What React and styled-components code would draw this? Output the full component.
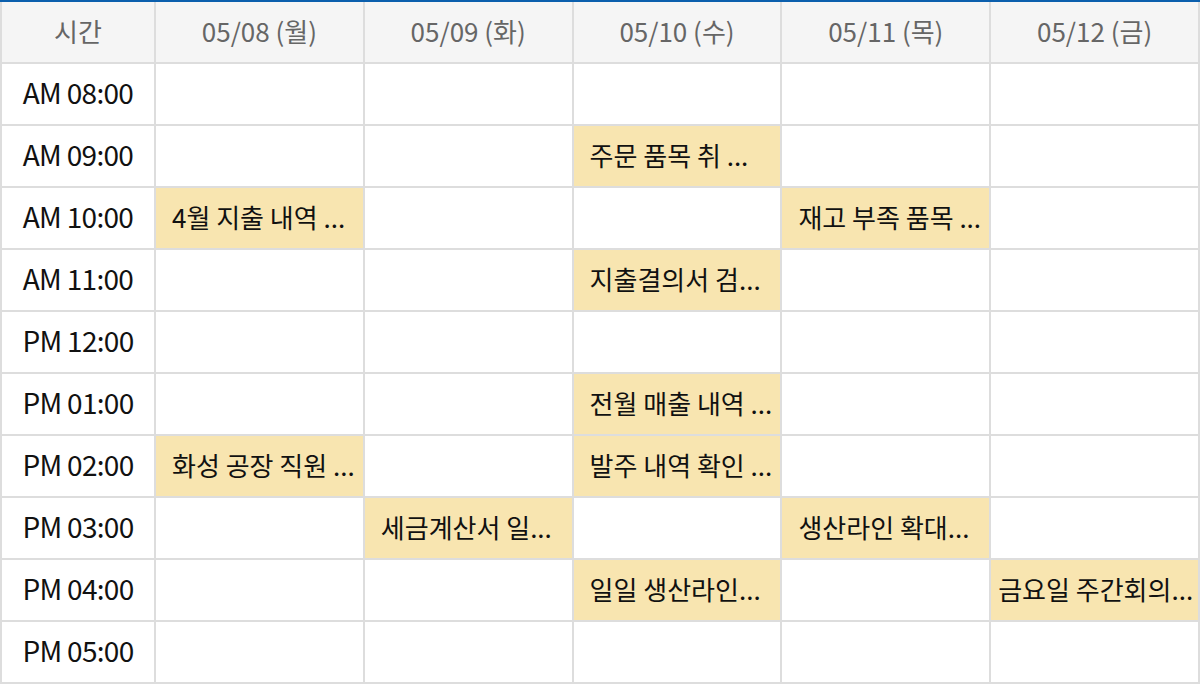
import styled, { createGlobalStyle } from "styled-components";

const GlobalStyle = createGlobalStyle`
	html, body {
		margin: 0;
		padding: 0;
		background: #fff;
	}
	body {
		font-family: "Noto Sans CJK KR", "Noto Sans", sans-serif;
	}
`;

const days = ["05/08 (월)", "05/09 (화)", "05/10 (수)", "05/11 (목)", "05/12 (금)"];

const times = [
	"AM 08:00",
	"AM 09:00",
	"AM 10:00",
	"AM 11:00",
	"PM 12:00",
	"PM 01:00",
	"PM 02:00",
	"PM 03:00",
	"PM 04:00",
	"PM 05:00",
];

// "row-day" -> title (long ones overflow the cell and sit tighter)
const events = {
	"1-2": { title: "주문 품목 취 ..." },
	"2-0": { title: "4월 지출 내역 ..." },
	"2-3": { title: "재고 부족 품목 ..." },
	"3-2": { title: "지출결의서 검..." },
	"5-2": { title: "전월 매출 내역 ..." },
	"6-0": { title: "화성 공장 직원 ..." },
	"6-2": { title: "발주 내역 확인 ..." },
	"7-1": { title: "세금계산서 일..." },
	"7-3": { title: "생산라인 확대..." },
	"8-2": { title: "일일 생산라인..." },
	"8-4": { title: "금요일 주간회의...", wide: true },
};

export default function App() {
	return (
		<>
			<GlobalStyle />
			<Schedule>
				<HeadCell>시간</HeadCell>
				{days.map((d) => (
					<HeadCell key={d}>{d}</HeadCell>
				))}
				{times.map((t, r) => (
					<Row key={t} time={t} r={r} />
				))}
			</Schedule>
		</>
	);
}

function Row({ time, r }) {
	return (
		<>
			<TimeCell>{time}</TimeCell>
			{days.map((d, c) => {
				const ev = events[`${r}-${c}`];
				return (
					<DayCell key={d} $filled={!!ev} $wide={ev?.wide}>
						{ev && <EventText>{ev.title}</EventText>}
					</DayCell>
				);
			})}
		</>
	);
}

const Schedule = styled.div`
	width: 1200px;
	box-sizing: border-box;
	display: grid;
	grid-template-columns: 152px repeat(5, 1fr);
	grid-auto-rows: 60px;
	gap: 2px;
	padding: 0 2px 2px;
	background: #dddddd;
	border-top: 2px solid #0b5fad;
`;

const HeadCell = styled.div`
	background: #f5f5f5;
	color: #666;
	font-size: 26px;
	display: flex;
	align-items: center;
	justify-content: center;
	padding-bottom: 4px;
`;

const TimeCell = styled.div`
	background: #fff;
	color: #111;
	font-size: 28px;
	letter-spacing: -0.7px;
	display: flex;
	align-items: center;
	justify-content: center;
	padding-bottom: 4px;
`;

const DayCell = styled.div`
	background: ${(p) => (p.$filled ? "#f8e5b0" : "#fff")};
	display: flex;
	align-items: center;
	padding: 0 4px 4px ${(p) => (p.$wide ? "7px" : "16px")};
	min-width: 0;
	overflow: hidden;
`;

const EventText = styled.span`
	color: #111;
	font-size: 26px;
	white-space: nowrap;
	overflow: hidden;
`;
